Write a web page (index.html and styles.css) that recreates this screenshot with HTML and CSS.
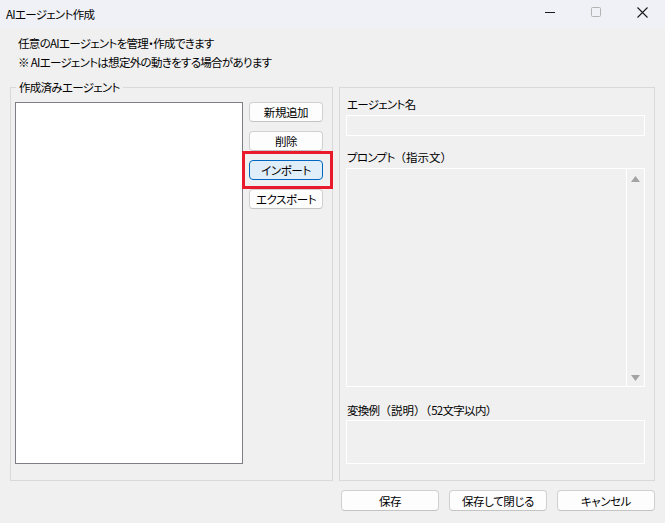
FILE: index.html
```html
<!DOCTYPE html>
<html lang="ja">
<head>
<meta charset="utf-8">
<title>AIエージェント作成</title>
<link rel="stylesheet" href="styles.css">
</head>
<body>
<div class="window">
  <header class="titlebar">
    <span class="title">AIエージェント作成</span>
    <div class="caption-buttons">
      <span class="caption-btn">
        <svg width="10" height="10" viewBox="0 0 10 10"><path d="M0 5.5H10" stroke="#1a1a1a" stroke-width="1"/></svg>
      </span>
      <span class="caption-btn">
        <svg width="10" height="10" viewBox="0 0 10 10"><rect x="0.5" y="0.5" width="9" height="9" rx="1" fill="none" stroke="#b4b4b4" stroke-width="1"/></svg>
      </span>
      <span class="caption-btn">
        <svg width="11" height="11" viewBox="0 0 11 11"><path d="M0.5 0.5L10.5 10.5M10.5 0.5L0.5 10.5" stroke="#1a1a1a" stroke-width="1.1"/></svg>
      </span>
    </div>
  </header>

  <main class="content">
    <div class="intro">
      <p>任意のAIエージェントを管理・作成できます</p>
      <p>※ AIエージェントは想定外の動きをする場合があります</p>
    </div>

    <div class="panels">
      <section class="group">
        <span class="group-title">作成済みエージェント</span>
        <div class="group-body">
          <div class="listbox"></div>
          <div class="side-buttons">
            <button class="btn">新規追加</button>
            <button class="btn">削除</button>
            <button class="btn btn-focus">インポート</button>
            <button class="btn">エクスポート</button>
            <span class="highlight"></span>
          </div>
        </div>
      </section>

      <section class="editor">
        <label class="field-label">エージェント名</label>
        <div class="textbox name-box"></div>

        <label class="field-label">プロンプト<span class="fw">（指示文）</span></label>
        <div class="textbox prompt-box">
          <div class="prompt-text"></div>
          <div class="scrollbar">
            <svg width="9" height="6" viewBox="0 0 9 6"><path d="M4.5 0L9 6H0Z" fill="#a3a3a3"/></svg>
            <svg width="9" height="6" viewBox="0 0 9 6"><path d="M0 0H9L4.5 6Z" fill="#a3a3a3"/></svg>
          </div>
        </div>

        <label class="field-label">変換例<span class="fw">（説明）（</span>52文字以内<span class="fw">）</span></label>
        <div class="textbox example-box"></div>
      </section>
    </div>

    <footer class="footer">
      <button class="btn btn-wide">保存</button>
      <button class="btn btn-wide">保存して閉じる</button>
      <button class="btn btn-wide">キャンセル</button>
    </footer>
  </main>
</div>
</body>
</html>
```

FILE: styles.css
```css
* {
  box-sizing: border-box;
}

html, body {
  margin: 0;
  padding: 0;
}

body {
  font-family: "Noto Sans CJK JP", "Noto Sans", sans-serif;
  font-size: 11.5px;
  letter-spacing: -0.7px;
  font-feature-settings: "palt";
  color: #000;
  background: #f0f0f0;
}

/* full-width brackets keep their natural spacing */
.fw {
  font-feature-settings: normal;
  letter-spacing: 0;
}

.window {
  width: 665px;
  height: 523px;
  background: #f0f0f0;
  display: flex;
  flex-direction: column;
}

/* title bar */
.titlebar {
  height: 28px;
  background: #eff1f7;
  display: flex;
  align-items: center;
  justify-content: space-between;
  padding-left: 6px;
}

.title {
  line-height: 16px;
}

.caption-buttons {
  display: flex;
  height: 28px;
}

.caption-btn {
  width: 46px;
  height: 28px;
  display: flex;
  align-items: center;
  justify-content: center;
  padding-bottom: 4px;
}

/* body */
.content {
  flex: 1;
  display: flex;
  flex-direction: column;
  padding: 6px 10px 0 10px;
}

.intro {
  padding-left: 8px;
}

.intro p {
  margin: 0;
  line-height: 19px;
}

.panels {
  margin-top: 15px;
  height: 394px;
  display: flex;
  gap: 6px;
}

/* group box with caption on its border */
.group {
  width: 323px;
  border: 1px solid #d9d9d9;
  display: flex;
  flex-direction: column;
  padding: 0 9px 16px 4px;
}

.group-title {
  align-self: flex-start;
  margin: -10px 0 0 1px;
  padding: 0 3px;
  line-height: 18px;
  background: #f0f0f0;
}

.group-body {
  flex: 1;
  margin-top: 6px;
  display: flex;
  gap: 6px;
}

.listbox {
  width: 228px;
  background: #fff;
  border: 1px solid #7e7e86;
}

.side-buttons {
  position: relative;
  width: 74px;
  display: flex;
  flex-direction: column;
  gap: 9px;
}

.btn {
  font-family: inherit;
  font-size: 11.5px;
  letter-spacing: -0.4px;
  font-feature-settings: "palt";
  color: #000;
  height: 20px;
  padding: 0;
  line-height: 18px;
  background: #fdfdfd;
  border: 1px solid #d0d0d0;
  border-bottom-color: #c4c4c4;
  border-radius: 4px;
}

.btn-focus {
  background: #e0eef9;
  border-color: #0067c0;
}

.highlight {
  position: absolute;
  left: -7px;
  top: 49px;
  width: 91px;
  height: 38px;
  border: 3px solid #e81a2b;
  pointer-events: none;
}

/* editor panel */
.editor {
  width: 317px;
  border: 1px solid #d9d9d9;
  display: flex;
  flex-direction: column;
  padding: 7px 9px 0 6px;
}

.field-label {
  display: block;
  line-height: 18px;
  padding-left: 1px;
  margin-bottom: 2px;
}

.textbox {
  border: 1px solid #fff;
  background: #f0f0f0;
}

.name-box {
  height: 21px;
  margin-bottom: 12px;
}

.prompt-box {
  height: 219px;
  display: flex;
  margin-bottom: 14px;
}

.prompt-text {
  flex: 1;
}

.scrollbar {
  width: 18px;
  border-left: 1px solid #fff;
  display: flex;
  flex-direction: column;
  justify-content: space-between;
  align-items: center;
  padding: 7px 0 5px 0;
}

.example-box {
  height: 44px;
  margin-top: -1px;
}

/* bottom buttons */
.footer {
  margin-top: 9px;
  display: flex;
  justify-content: flex-end;
  gap: 10px;
}

.btn-wide {
  width: 98px;
  height: 21px;
}
```
